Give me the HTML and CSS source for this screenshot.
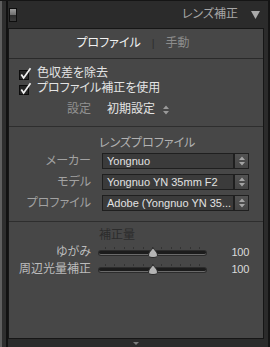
FILE: index.html
```html
<!DOCTYPE html>
<html>
<head>
  <meta charset="utf-8">
  <meta name="viewport" content="width=device-width">
  <title>レンズ補正</title>
  <link rel="stylesheet" href="styles.css">
</head>
<body>
  <div class="frame">
    <div class="gutter"></div>
    <div class="column">
      <div class="head">
        <span class="switch"></span>
        <span class="head-title">レンズ補正</span>
        <svg class="head-arrow" width="9" height="8" viewBox="0 0 9 8"><path d="M0 0H9L4.5 8Z" fill="#a9a9a9"/></svg>
      </div>

      <div class="panel">
        <div class="tabs">
          <span class="tab active">プロファイル</span>
          <span class="tab-sep">|</span>
          <span class="tab">手動</span>
        </div>

        <div class="section checks">
          <div class="check">
            <svg width="14" height="14" viewBox="0 0 14 14"><rect x="0.5" y="3.5" width="9" height="9" fill="#262626" stroke="#0c0c0c"/><path d="M2.3 7.6L4.6 11L11.5 1.2" fill="none" stroke="#f0f0f0" stroke-width="1.7"/></svg>
            <span>色収差を除去</span>
          </div>
          <div class="check">
            <svg width="14" height="14" viewBox="0 0 14 14"><rect x="0.5" y="3.5" width="9" height="9" fill="#262626" stroke="#0c0c0c"/><path d="M2.3 7.6L4.6 11L11.5 1.2" fill="none" stroke="#f0f0f0" stroke-width="1.7"/></svg>
            <span>プロファイル補正を使用</span>
          </div>
          <div class="row setting">
            <span class="label">設定</span>
            <span class="value">初期設定<svg class="updown" width="6" height="10" viewBox="0 0 6 10"><path d="M0 4L3 0.5L6 4ZM0 6L3 9.5L6 6Z" fill="#9a9a9a"/></svg></span>
          </div>
        </div>

        <div class="section lens">
          <div class="section-title">レンズプロファイル</div>
          <div class="row">
            <span class="label">メーカー</span>
            <div class="popup">
              <span class="popup-text">Yongnuo</span>
              <span class="popup-btn"><svg width="6" height="10" viewBox="0 0 6 10"><path d="M0 4L3 0.5L6 4ZM0 6L3 9.5L6 6Z" fill="#a4a4a4"/></svg></span>
            </div>
          </div>
          <div class="row">
            <span class="label">モデル</span>
            <div class="popup">
              <span class="popup-text">Yongnuo YN 35mm F2</span>
              <span class="popup-btn"><svg width="6" height="10" viewBox="0 0 6 10"><path d="M0 4L3 0.5L6 4ZM0 6L3 9.5L6 6Z" fill="#a4a4a4"/></svg></span>
            </div>
          </div>
          <div class="row">
            <span class="label">プロファイル</span>
            <div class="popup">
              <span class="popup-text">Adobe (Yongnuo YN 35...</span>
              <span class="popup-btn"><svg width="6" height="10" viewBox="0 0 6 10"><path d="M0 4L3 0.5L6 4ZM0 6L3 9.5L6 6Z" fill="#a4a4a4"/></svg></span>
            </div>
          </div>
        </div>

        <div class="section amount">
          <div class="section-title dim">補正量</div>
          <div class="row slider-row">
            <span class="label">ゆがみ</span>
            <div class="slider">
              <div class="ticks"><i></i><i></i><i></i><i></i><i></i><i></i><i></i><i></i><i></i><i></i><i></i></div>
              <div class="track"></div>
              <svg class="thumb" width="10" height="11" viewBox="0 0 10 11"><path d="M5 0.5C6 3 9.5 5 9.5 8C9.5 9.8 8 10.5 5 10.5C2 10.5 0.5 9.8 0.5 8C0.5 5 4 3 5 0.5Z" fill="#b4b4b4" stroke="#2a2a2a"/></svg>
            </div>
            <span class="num">100</span>
          </div>
          <div class="row slider-row">
            <span class="label">周辺光量補正</span>
            <div class="slider">
              <div class="ticks"><i></i><i></i><i></i><i></i><i></i><i></i><i></i><i></i><i></i><i></i><i></i></div>
              <div class="track"></div>
              <svg class="thumb" width="10" height="11" viewBox="0 0 10 11"><path d="M5 0.5C6 3 9.5 5 9.5 8C9.5 9.8 8 10.5 5 10.5C2 10.5 0.5 9.8 0.5 8C0.5 5 4 3 5 0.5Z" fill="#b4b4b4" stroke="#2a2a2a"/></svg>
            </div>
            <span class="num">100</span>
          </div>
        </div>
      </div>

      <div class="foot">
        <svg width="6" height="3" viewBox="0 0 6 3"><path d="M0 0H6L3 3Z" fill="#7c7c7c"/></svg>
      </div>
    </div>
    <div class="edge"></div>
  </div>
</body>
</html>
```

FILE: styles.css
```css
body {
  margin: 0;
  background: #2b2b2b;
  font-family: "Liberation Sans", "Noto Sans CJK JP", sans-serif;
  font-size: 12px;
  line-height: 15px;
  font-feature-settings: "palt";
}

.frame {
  display: flex;
  height: 347px;
  border-top: 1px solid #151515;
  box-sizing: border-box;
}

.gutter {
  width: 8px;
  background: linear-gradient(to right, #5e5e5e 0 2px, #2e2e2e 2px 6px, #111 6px 8px);
}

.edge {
  width: 6px;
  background: linear-gradient(to right, #2b2b2b 0 4px, #141414 4px);
}

.column {
  width: 256px;
  display: flex;
  flex-direction: column;
}

/* header bar */
.head {
  height: 27px;
  display: flex;
  align-items: center;
  padding: 0 4px 0 1px;
}

.switch {
  width: 8px;
  height: 14px;
  box-sizing: border-box;
  border: 1px solid #0e0e0e;
  background: linear-gradient(#9c9c9c, #6e6e6e 50%, #2c2c2c 50%, #3c3c3c);
}

.head-title {
  margin-left: auto;
  color: #a6a6a6;
}

.head-arrow {
  margin-left: 13px;
}

/* panel */
.panel {
  flex: 1;
  display: flex;
  flex-direction: column;
  background: #474747;
  border: 1px solid #161616;
}

.tabs {
  height: 29px;
  display: flex;
  justify-content: center;
  align-items: center;
  gap: 11px;
  padding-right: 6px;
  border-bottom: 1px solid #2a2a2a;
}

.tab {
  color: #8c8c8c;
}

.tab.active {
  color: #f2f2f2;
}

.tab-sep {
  color: #2e2e2e;
  font-size: 11px;
}

.section {
  border-bottom: 1px solid #2e2e2e;
}

.section:last-child {
  flex: 1;
  border-bottom: none;
}

.checks {
  padding: 7px 0 9px;
}

.check {
  height: 15px;
  display: flex;
  align-items: center;
  padding-left: 10px;
  color: #e4e4e4;
}

.check svg {
  margin-right: 4px;
}

.section-title {
  padding-left: 90px;
  color: #b2b2b2;
}

.section-title.dim {
  color: #2c2c2c;
}

.row {
  display: grid;
  grid-template-columns: 82px 1fr;
  column-gap: 11px;
  align-items: center;
  padding-right: 14px;
}

.label {
  text-align: right;
  color: #a2a2a2;
}

.setting {
  margin-top: 6px;
  height: 15px;
}

.setting .label {
  color: #929292;
}

.setting .value {
  display: flex;
  align-items: center;
  padding-left: 5px;
  color: #e4e4e4;
}

.updown {
  margin-left: 8px;
}

/* lens profile popups */
.lens {
  padding: 9px 0 10px;
}

.lens .section-title {
  margin-bottom: 2px;
}

.lens .row + .row {
  margin-top: 5px;
}

.popup {
  display: flex;
  height: 16px;
}

.popup-text {
  flex: 1;
  box-sizing: border-box;
  border: 1px solid #1f1f1f;
  background: #3b3b3b;
  padding-left: 4px;
  font-size: 11px;
  line-height: 14px;
  color: #e2e2e2;
  white-space: nowrap;
  overflow: hidden;
}

.popup-btn {
  width: 15px;
  box-sizing: border-box;
  border: 1px solid #1f1f1f;
  background: linear-gradient(#525252, #464646);
  display: flex;
  align-items: center;
  justify-content: center;
}

/* sliders */
.amount {
  padding-top: 6px;
}

.amount .section-title {
  margin-bottom: 1px;
}

.slider-row {
  grid-template-columns: 82px 107px 1fr;
  column-gap: 8px;
  height: 17px;
}

.slider-row .label {
  color: #bcbcbc;
}

.slider {
  position: relative;
  height: 17px;
}

.ticks {
  display: flex;
  justify-content: space-between;
  height: 2px;
  margin: 3px 6px 0;
}

.ticks i {
  width: 1px;
  background: #333;
}

.track {
  height: 4px;
  margin-top: 2px;
  box-sizing: border-box;
  border-radius: 2px;
  background: #1c1c1c;
  border-bottom: 1px solid #6a6a6a;
  box-shadow: 0 0 0 1px #2c2c2c;
}

.thumb {
  position: absolute;
  left: calc(50% - 5px);
  top: 3px;
}

.num {
  justify-self: end;
  font-size: 11px;
  letter-spacing: -0.3px;
  color: #dadada;
}

.foot {
  height: 8px;
  display: flex;
  justify-content: center;
  align-items: flex-start;
  padding-top: 3px;
  box-sizing: border-box;
}
```
